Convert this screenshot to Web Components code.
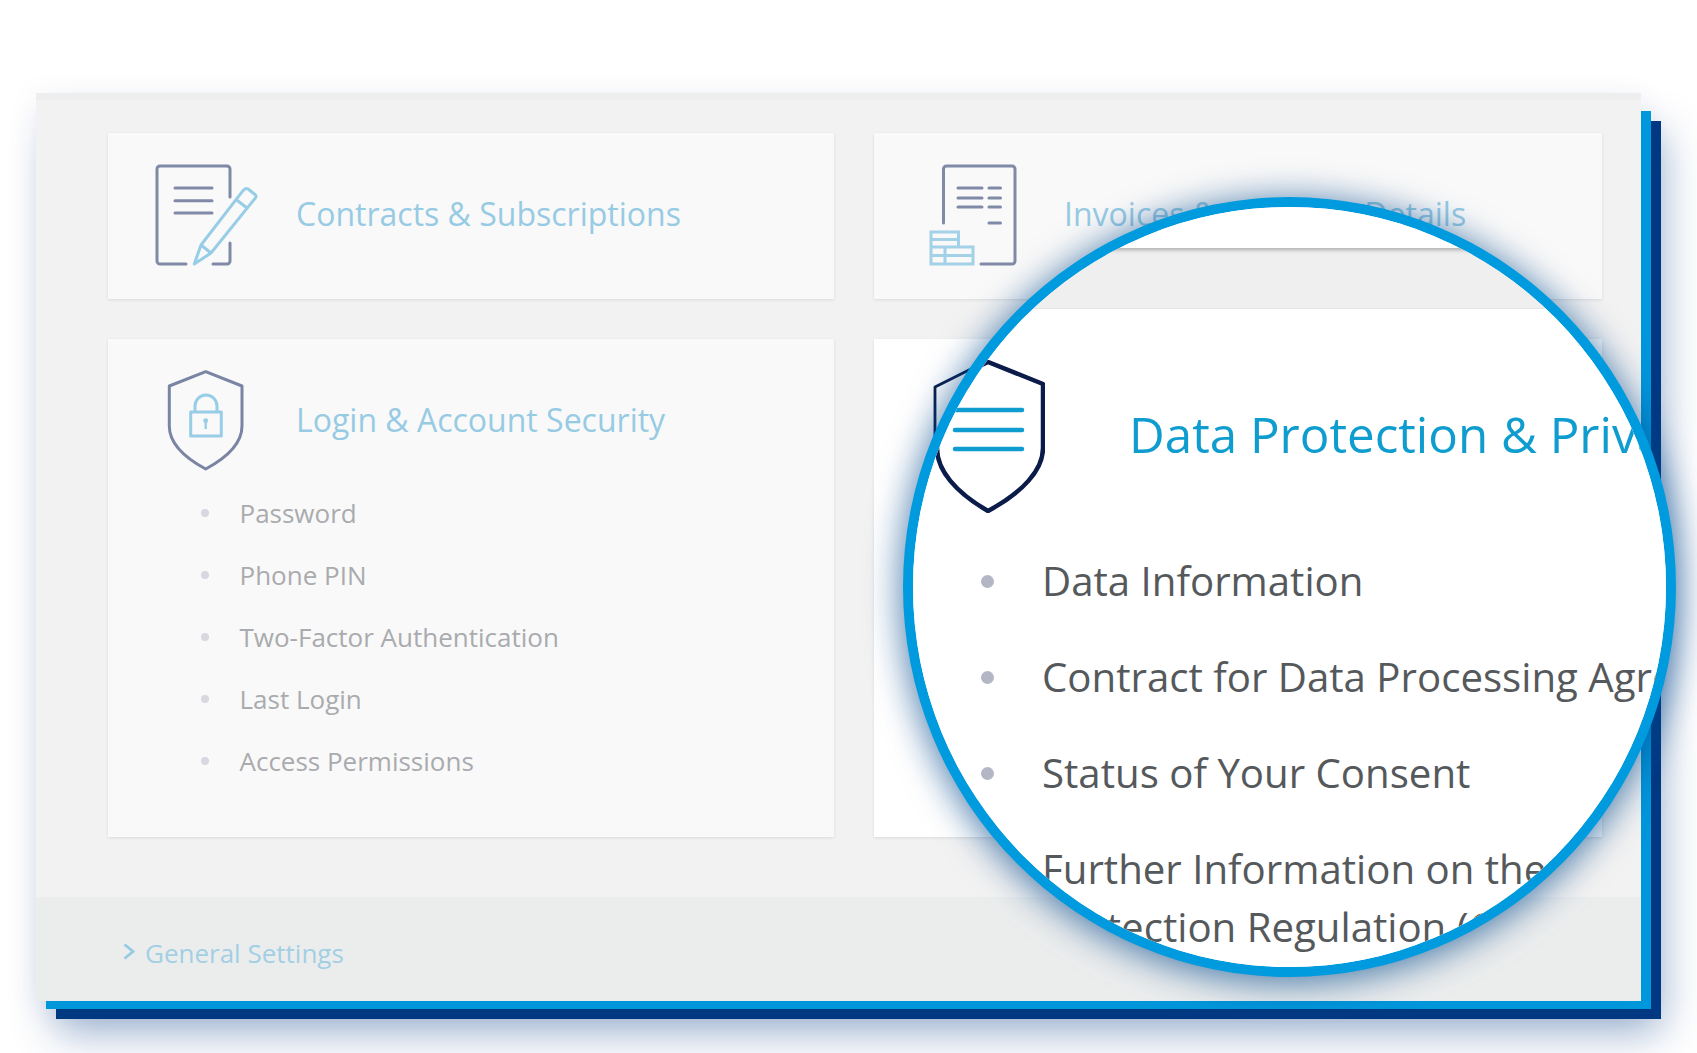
<!DOCTYPE html>
<html lang="en">
<head>
<meta charset="utf-8">
<title>Account overview</title>
<style>
  html, body { margin: 0; background: #fff; }
  body {
    width: 1697px;
    height: 1053px;
    overflow: hidden;
    padding: 93px 0 0 36px;
    box-sizing: border-box;
    font-family: "Open Sans", "Liberation Sans", sans-serif;
  }
</style>
</head>
<body>

<account-panel>
  <settings-card heading="Contracts &amp; Subscriptions">
    <svg slot="icon" viewBox="0 0 120 110" width="120" height="110" fill="none" stroke-width="3" stroke-linecap="round" stroke-linejoin="round">
      <path stroke="#8089a6" d="M87 37V9a3 3 0 0 0-3-3H17a3 3 0 0 0-3 3v92a3 3 0 0 0 3 3h26M70 104h14a3 3 0 0 0 3-3V83M32 28h37M32 40.7h37M32 53h37"/>
      <path stroke="#97cde6" d="M51.3 104 58 85 100 30.7c1.800-2.200 3.500-2.700 5-1.700l7 5.500c1.200 1 1.200 2.500.2 3.700L68 93zM58 85l10 8M93.700 40l10.300 8"/>
    </svg>
  </settings-card>

  <settings-card heading="Invoices &amp; Payment Details" style="--icon-width: 155px">
    <svg slot="icon" viewBox="0 0 120 110" width="120" height="110" fill="none" stroke-width="3" stroke-linecap="round" stroke-linejoin="round">
      <path stroke="#8089a6" d="M34.500 63V9a3 3 0 0 1 3-3H103a3 3 0 0 1 3 3v92a3 3 0 0 1-3 3H72M49 28h24M49 38h24M49 47h24M80 28h11.500M80 38h11.500M80 47h11.500M80 63h11.500"/>
      <path stroke="#a3d2e8" stroke-linecap="butt" stroke-linejoin="miter" d="M22 72h27.500v15H22zM22 79.500h27.500M22 87h42v17H22zM22 95.500h42M36 87v17"/>
    </svg>
  </settings-card>

  <settings-card heading="Login &amp; Account Security">
    <svg slot="icon" viewBox="0 0 120 110" width="120" height="110" fill="none" stroke-width="3" stroke-linejoin="round">
      <path stroke="#7a85a3" d="M62.700 5.700 99 20v40c0 16-14 31-36.300 43C40.400 91 26.300 76 26.300 60V20z"/>
      <path stroke="#97cde6" d="M47.700 46h30.600v24H47.700zM52 46v-6a11 11 0 0 1 22 0v6"/>
      <circle cx="62.700" cy="54.700" r="2.400" fill="#97cde6" stroke="none"/>
      <path stroke="#97cde6" stroke-width="2.400" d="M62.700 55v8"/>
    </svg>
    <card-item>Password</card-item>
    <card-item>Phone PIN</card-item>
    <card-item>Two-Factor Authentication</card-item>
    <card-item>Last Login</card-item>
    <card-item>Access Permissions</card-item>
  </settings-card>

  <settings-card active>
    <svg slot="icon" viewBox="0 0 120 110" width="120" height="110" fill="none" style="overflow:visible">
      <path stroke="#0b1c4b" stroke-width="2.800" stroke-linejoin="round" d="M80 -6 136 17v70c0 18-24 42-56 62C50 130 26 108 26 87V21z"/>
    </svg>
  </settings-card>

  <footer-link slot="footer">General Settings</footer-link>
</account-panel>

<magnifier-lens>
  <settings-card slot="card" heading="Data Protection &amp; Privacy" active>
    <svg slot="icon" viewBox="0 0 110 153" width="110" height="153" fill="none" stroke-linecap="round" stroke-linejoin="round">
      <path stroke="#0b1c4b" stroke-width="4.500" d="M53 2 108 24v64c0 22-20 44-55 63C20 132 2 110 2 88V26z"/>
      <path stroke="#0f9ccf" stroke-width="4.500" d="M20 50h67M20 70h67M20 89h67"/>
    </svg>
    <card-item>Data Information</card-item>
    <card-item>Contract for Data Processing Agreement</card-item>
    <card-item>Status of Your Consent</card-item>
    <card-item>Further Information on the General Data<br>Protection Regulation (GDPR)</card-item>
  </settings-card>
</magnifier-lens>

<script>
class AccountPanel extends HTMLElement {
  constructor() {
    super();
    this.attachShadow({ mode: 'open' });
    this.shadowRoot.innerHTML = `
      <style>
        :host {
          display: block;
          position: relative;
          width: 1605px;
          height: 908px;
        }
        /* the two coloured sheets that stick out behind the panel */
        .sheet { position: absolute; }
        .sheet--dark {
          left: 20px; right: -20px; top: 28px; bottom: -18px;
          background: #003a83;
          box-shadow: 0 12px 40px rgba(0, 58, 131, 0.42);
        }
        .sheet--blue {
          left: 10px; right: -10px; top: 18px; bottom: -8px;
          background: #009ade;
        }
        .panel {
          position: relative;
          height: 100%;
          display: flex;
          flex-direction: column;
          background: linear-gradient(#eeeeee 0 7px, #f2f2f2 7px, #f2f2f2 100%);
          box-shadow: 0 4px 30px rgba(0, 58, 131, 0.07);
        }
        .grid {
          flex: 1;
          display: grid;
          grid-template-columns: 726px 728px;
          grid-template-rows: 166px 498px;
          column-gap: 40px;
          row-gap: 40px;
          padding: 40px 0 0 72px;
        }
        .footer {
          height: 104px;
          box-sizing: border-box;
          padding: 8px 0 0 87px;
          display: flex;
          align-items: center;
          background: #ebeded;
        }
      </style>
      <div class="sheet sheet--dark"></div>
      <div class="sheet sheet--blue"></div>
      <div class="panel">
        <div class="grid"><slot></slot></div>
        <div class="footer"><slot name="footer"></slot></div>
      </div>
    `;
  }
}

class SettingsCard extends HTMLElement {
  static get observedAttributes() {
    return ['heading'];
  }

  constructor() {
    super();
    this.attachShadow({ mode: 'open' });
  }

  connectedCallback() {
    this.render();
  }

  attributeChangedCallback(name, oldValue, newValue) {
    if (oldValue !== newValue) {
      this.render();
    }
  }

  render() {
    const heading = this.getAttribute('heading') || '';
    this.shadowRoot.innerHTML = `
      <style>
        :host {
          display: block;
          box-sizing: border-box;
          padding-top: var(--card-top, 20px);
          background: #f9f9f9;
          box-shadow: 0 1px 3px rgba(0, 0, 0, 0.1);
          font-family: "Open Sans", "Liberation Sans", sans-serif;
        }
        :host([active]) { background: #fff; }
        .head {
          display: flex;
          align-items: center;
          height: var(--head-height, 124px);
          padding-left: var(--head-left, 35px);
        }
        .icon {
          flex: none;
          width: var(--icon-width, 153px);
          display: flex;
        }
        h2 {
          margin: var(--title-shift, -1px) 0 0;
          font-size: var(--title-size, 32px);
          font-weight: 400;
          line-height: 1.2;
          color: var(--title-color, #97cbe4);
          white-space: nowrap;
        }
        .list { display: block; margin-top: var(--list-top, -1px); }
      </style>
      <div class="head">
        <div class="icon"><slot name="icon"></slot></div>
        <h2>${heading}</h2>
      </div>
      <div class="list"><slot></slot></div>
    `;
  }
}

class CardItem extends HTMLElement {
  constructor() {
    super();
    this.attachShadow({ mode: 'open' });
    this.shadowRoot.innerHTML = `
      <style>
        :host {
          display: flex;
          align-items: flex-start;
          padding: var(--item-pad, 13px) 0 var(--item-pad, 13px) var(--item-left, 93px);
          font-size: var(--item-size, 26px);
          line-height: var(--item-line, 36px);
          color: var(--item-color, #a9abae);
          white-space: nowrap;
        }
        .dot {
          flex: none;
          width: var(--dot-size, 8px);
          height: var(--dot-size, 8px);
          margin-top: calc((var(--item-line, 36px) - var(--dot-size, 8px)) / 2);
          margin-right: var(--dot-gap, 30.500px);
          border-radius: 50%;
          background: var(--dot-color, #d7d8e0);
        }
      </style>
      <span class="dot"></span>
      <div><slot></slot></div>
    `;
  }
}

class FooterLink extends HTMLElement {
  constructor() {
    super();
    this.attachShadow({ mode: 'open' });
    this.shadowRoot.innerHTML = `
      <style>
        :host {
          display: flex;
          align-items: center;
          gap: 10px;
          font-size: 26px;
          color: #a3cfe4;
          font-family: "Open Sans", "Liberation Sans", sans-serif;
        }
        svg { display: block; margin-top: -3px; }
      </style>
      <svg width="12" height="17" viewBox="0 0 12 17" fill="none" stroke="#97cbe4" stroke-width="2.800">
        <path d="M1.500 1.500 10 8.500 1.500 15.500"/>
      </svg>
      <span><slot></slot></span>
    `;
  }
}

class MagnifierLens extends HTMLElement {
  constructor() {
    super();
    this.attachShadow({ mode: 'open' });
    this.shadowRoot.innerHTML = `
      <style>
        :host {
          display: block;
          position: absolute;
          left: 903px;
          top: 197px;
          width: 773px;
          height: 780px;
          box-sizing: border-box;
          border: 10px solid #009ade;
          border-radius: 50%;
          box-shadow: 0 4px 34px 3px rgba(0, 72, 140, 0.66);
          background: #fff;
        }
        .clip {
          height: 100%;
          border-radius: 50%;
          overflow: hidden;
          display: flex;
          flex-direction: column;
        }
        .upper {
          flex: none;
          height: 41px;
          background: #fff;
          box-shadow: 0 2px 4px rgba(0, 0, 0, 0.28);
          position: relative;
        }
        .gap {
          flex: none;
          height: 61px;
          background: #efefef;
          border-bottom: 1px solid #e9e9e9;
          box-sizing: border-box;
        }
        ::slotted(settings-card) {
          flex: 1;
          --card-top: 51px;
          --head-height: 153px;
          --head-left: 22px;
          --icon-width: 194px;
          --title-size: 49.300px;
          --title-color: #0f9ccf;
          --title-shift: -6px;
          --list-top: 20px;
          --item-left: 68px;
          --item-size: 40.200px;
          --item-line: 58px;
          --item-pad: 19px;
          --item-color: #55595c;
          --dot-size: 13px;
          --dot-gap: 48px;
          --dot-color: #b3b6c4;
        }
      </style>
      <div class="clip">
        <div class="upper"></div>
        <div class="gap"></div>
        <slot name="card"></slot>
      </div>
    `;
  }
}

customElements.define('account-panel', AccountPanel);
customElements.define('settings-card', SettingsCard);
customElements.define('card-item', CardItem);
customElements.define('footer-link', FooterLink);
customElements.define('magnifier-lens', MagnifierLens);
</script>
</body>
</html>
